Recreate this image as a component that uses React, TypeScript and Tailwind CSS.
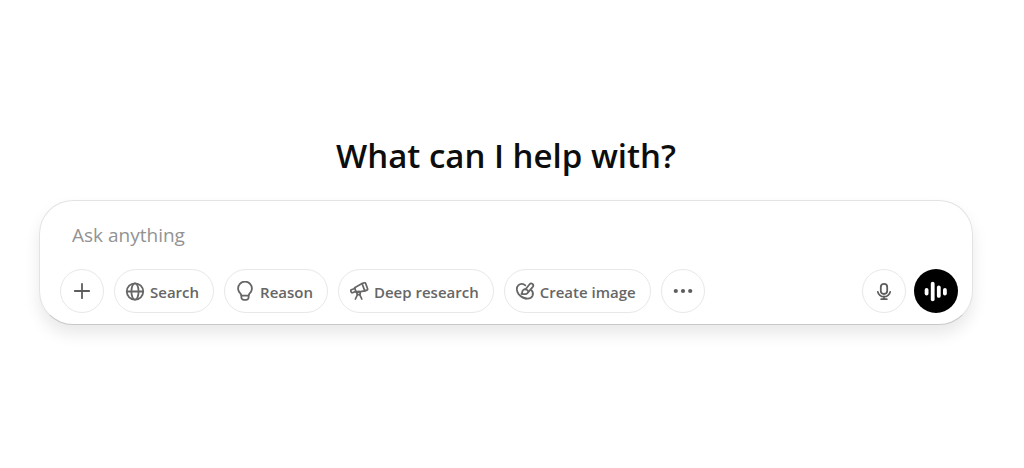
import React, { useState } from "react";

const iconProps = {
  viewBox: "0 0 20 20",
  fill: "none",
  stroke: "currentColor",
  strokeWidth: 1.8,
  strokeLinecap: "round" as const,
  strokeLinejoin: "round" as const,
  className: "w-5 h-5 shrink-0",
  "aria-hidden": true,
};

function PlusIcon() {
  return (
    <svg {...iconProps}>
      <path d="M10 2.8v14.4M2.8 10h14.4" />
    </svg>
  );
}

function GlobeIcon() {
  return (
    <svg {...iconProps}>
      <circle cx="10" cy="10.5" r="8.2" />
      <ellipse cx="10" cy="10.5" rx="3.6" ry="8.2" />
      <path d="M1.8 10.5h16.4" />
    </svg>
  );
}

function BulbIcon() {
  return (
    <svg {...iconProps}>
      <path d="M6.4 14.6l-.6-1.6a6.9 6.9 0 1 1 8.4 0l-.6 1.6z" />
      <path d="M6.4 14.6v1.8a2.5 2.5 0 0 0 2.5 2.5h2.2a2.5 2.5 0 0 0 2.5-2.5v-1.8" />
    </svg>
  );
}

function TelescopeIcon() {
  return (
    <svg {...iconProps} strokeWidth={1.7}>
      <path d="M13.1 2.6l2.2-.8a1 1 0 0 1 1.3.6l2 5.4a1 1 0 0 1-.6 1.3l-2.2.8z" />
      <path d="M13.1 2.6L5.6 6.7l1.7 4.7 8.5-1.5" />
      <path d="M5.9 7.5L2.3 8.8a.9.9 0 0 0-.5 1.1l.5 1.3a.9.9 0 0 0 1.1.5L7 10.4" />
      <circle cx="9.6" cy="12" r="1.7" />
      <path d="M8.6 13.4l-2.2 4.6M10.6 13.4l2.2 4.6" />
    </svg>
  );
}

function BrushIcon() {
  return (
    <svg {...iconProps}>
      <path d="M10.3 4.4C8.3 2.6 5.4 2.4 3.5 4.2c-2.3 2.1-2.2 6 .1 8.9 2 2.4 4.7 4 7.3 4.4" />
      <path d="M10.6 8.2l4-4.9a2 2 0 0 1 3.2 2.5l-4.3 5" />
      <path d="M13.4 10.6a3.3 3.3 0 0 1-3.1 2.5H7.1c-.6 0-.7-.5-.3-.9.5-.5.5-.9.5-1.5a2.7 2.7 0 0 1 3.5-2.3 3.2 3.2 0 0 1 2.6 2.2z" />
      <path d="M16.6 9.3c1.4 1.5 1.7 3.8.8 5.8-1 2-3.7 2.8-6.5 2.4" />
    </svg>
  );
}

function DotsIcon() {
  return (
    <svg viewBox="0 0 20 20" fill="currentColor" className="w-5 h-5 shrink-0" aria-hidden>
      <circle cx="2.8" cy="10" r="2.1" />
      <circle cx="10" cy="10" r="2.1" />
      <circle cx="17.2" cy="10" r="2.1" />
    </svg>
  );
}

function MicIcon() {
  return (
    <svg {...iconProps}>
      <rect x="6.8" y="2.8" width="6.4" height="10.2" rx="3.2" />
      <path d="M3.8 10.9a6.4 6.4 0 0 0 12.4 0M10 15.5v2.7M7.2 18.2h5.6" />
    </svg>
  );
}

function VoiceIcon() {
  return (
    <svg viewBox="0 0 24 24" fill="currentColor" className="w-6 h-6 shrink-0" aria-hidden>
      <rect x="0.7" y="9" width="3.8" height="7.4" rx="1.9" />
      <rect x="6.8" y="2.8" width="3.8" height="19.4" rx="1.9" />
      <rect x="12.9" y="6.6" width="3.8" height="12.2" rx="1.9" />
      <rect x="19" y="9" width="3.8" height="7.4" rx="1.9" />
    </svg>
  );
}

const TOOLS = [
  { id: "search", label: "Search", icon: GlobeIcon },
  { id: "reason", label: "Reason", icon: BulbIcon },
  { id: "research", label: "Deep research", icon: TelescopeIcon },
  { id: "image", label: "Create image", icon: BrushIcon },
];

function RoundButton({ label, children }: { label: string; children: React.ReactNode }) {
  return (
    <button
      type="button"
      aria-label={label}
      className="flex items-center justify-center w-11 h-11 shrink-0 rounded-full border border-[#e8e8e8] text-[#5d5d5d] hover:bg-gray-50"
    >
      {children}
    </button>
  );
}

export default function App() {
  const [prompt, setPrompt] = useState("");

  return (
    <main className="pt-[132px] pb-10 pl-[39px] pr-[51px] bg-white font-['Open_Sans',sans-serif]">
      <h1 className="text-center text-[33px] leading-[48px] font-semibold text-[#0d0d0d]">What can I help with?</h1>
      <form
        onSubmit={(e) => e.preventDefault()}
        className="mt-5 pt-4 pb-[11px] pl-5 pr-[14px] rounded-[34px] border border-[#e3e3e3] border-b-[#c8c8c8] bg-white shadow-[0_9px_16px_rgba(0,0,0,0.09)]"
      >
        <input
          type="text"
          aria-label="Ask anything"
          placeholder="Ask anything"
          value={prompt}
          onChange={(e) => setPrompt(e.target.value)}
          className="block w-full h-9 px-3 text-[19px] text-[#0d0d0d] placeholder:text-[#929292] outline-none"
        />
        <div className="mt-4 flex items-center gap-[10px]">
          <RoundButton label="Add files">
            <PlusIcon />
          </RoundButton>
          {TOOLS.map(({ id, label, icon: Icon }) => (
            <button
              key={id}
              type="button"
              className="flex items-center gap-[5px] h-11 pl-[10px] pr-[14px] shrink-0 rounded-full border border-[#e8e8e8] text-[15px] font-semibold text-[#666] hover:bg-gray-50"
            >
              <Icon />
              <span className="pt-[2px]">{label}</span>
            </button>
          ))}
          <RoundButton label="More">
            <DotsIcon />
          </RoundButton>
          <div className="ml-auto flex gap-2">
            <RoundButton label="Dictate">
              <MicIcon />
            </RoundButton>
            <button
              type="button"
              aria-label="Use voice mode"
              className="flex items-center justify-center w-11 h-11 rounded-full bg-black text-white"
            >
              <VoiceIcon />
            </button>
          </div>
        </div>
      </form>
    </main>
  );
}
